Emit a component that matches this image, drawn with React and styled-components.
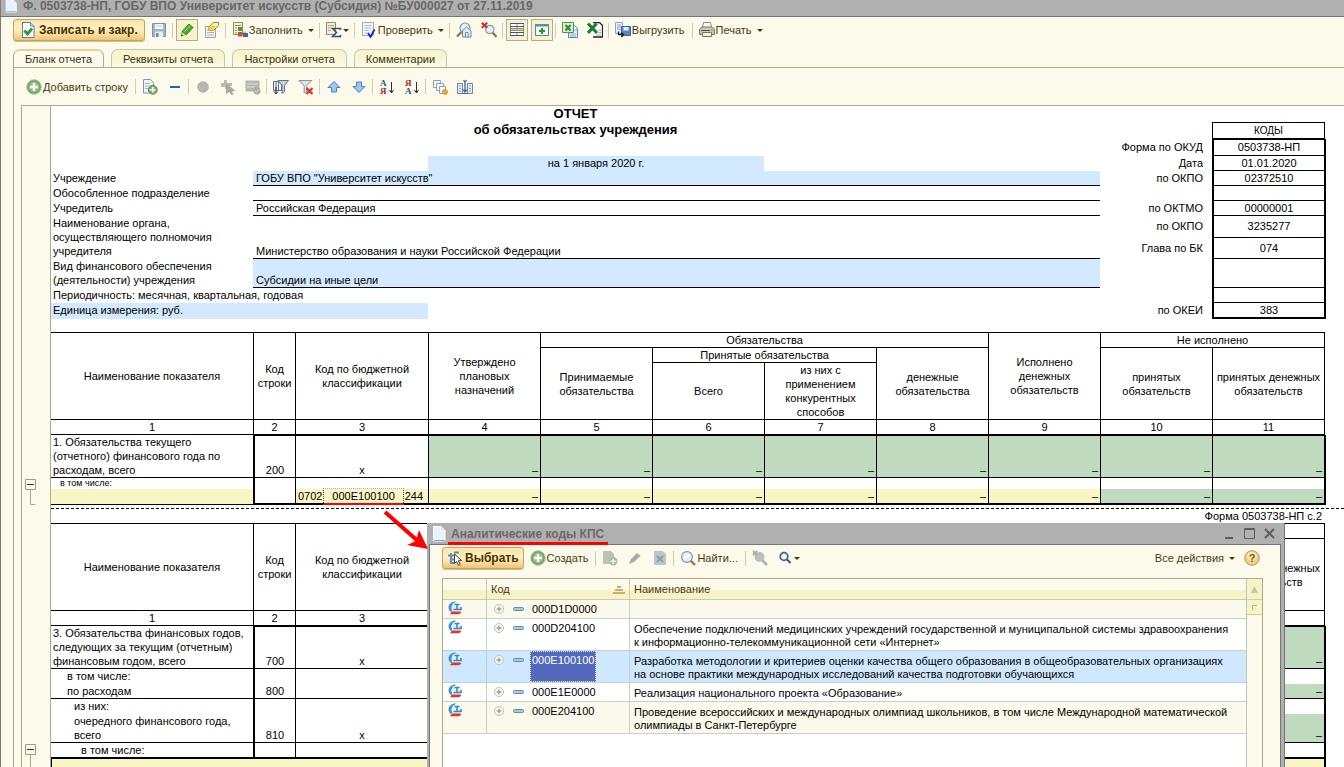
import { Fragment } from 'react';
import styled, { createGlobalStyle, css } from 'styled-components';

const GlobalStyle = createGlobalStyle`
  * {
    box-sizing: border-box;
  }

  body {
    margin: 0;
    overflow: hidden;
    background: #fcfaeb;
    font-family: 'Liberation Sans', Arial, sans-serif;
    font-size: 11px;
    color: #000;
  }

  button {
    font: inherit;
    color: inherit;
  }

  svg {
    display: block;
    flex: none;
  }
`;

/* ---------- window frame ---------- */

const Window = styled.div`
  position: relative;
  display: flex;
  flex-direction: column;
  height: 100vh;
  overflow: hidden;
  border-left: 1px solid #7c7c7c;
  background: #fcfaeb;
`;

const TitleBar = styled.header`
  display: flex;
  flex: none;
  align-items: center;
  gap: 5px;
  height: 17px;
  padding: 0 0 4px 3px;
  border-bottom: 1px solid #757575;
  background: #b0b0b0;
  overflow: hidden;
`;

const WindowTitle = styled.h1`
  margin: 0;
  font-size: 12px;
  line-height: 14px;
  font-weight: 700;
  color: #686868;
  white-space: nowrap;
`;

const Toolbar = styled.div`
  display: flex;
  flex: none;
  align-items: center;
  gap: 3px;
  height: 26px;
  padding: 0 12px;
  color: #4a3a0c;
`;

const SheetToolbar = styled(Toolbar)`
  height: 37px;
  padding: 0 9px;
`;

const ToolButton = styled.button`
  display: flex;
  align-items: center;
  gap: 1px;
  height: 22px;
  padding: 0 ${({ $labelled }) => ($labelled ? 4 : 2)}px 0 2px;
  border: 1px solid transparent;
  background: none;
  white-space: nowrap;

  ${({ $pressed }) =>
    $pressed &&
    css`
      border-color: #b5ab84;
      background: #f5f2cd;
    `}
`;

const PrimaryButton = styled.button`
  display: flex;
  align-items: center;
  gap: ${({ $compact }) => ($compact ? 2 : 3)}px;
  height: 22px;
  padding: 0 ${({ $compact }) => ($compact ? 4 : 6)}px;
  border: 1px solid #c9a55c;
  border-radius: 3px;
  background: linear-gradient(#fbe3ab, #fcefc4 45%, #f7dc9c 75%, #efc473);
  box-shadow: 0 1px 0 #d3bf8d;
  font-size: 12px;
  font-weight: 700;
  color: #4a3300;
  white-space: nowrap;
`;

const Separator = styled.span`
  width: 1px;
  height: 15px;
  margin-left: -1px;
  background: #c5d3b8;
`;

const Caret = styled.span`
  width: 5px;
  margin-left: ${({ $tight }) => ($tight ? 0 : 4)}px;
  border: solid transparent;
  border-width: 3px 3px 0;
  border-top-color: #4a3a0c;
`;

const Spacer = styled.span`
  flex: 1;
`;

const TabStrip = styled.nav`
  display: flex;
  flex: none;
  align-items: flex-end;
  gap: 7px;
  height: 24px;
  padding-left: 12px;
`;

const Tab = styled.button`
  height: 18px;
  padding: 0 11px;
  border: 1px solid #b9cdb0;
  border-bottom: none;
  border-radius: 7px 7px 0 0;
  background: linear-gradient(#f7f5c8, #f8f6d6 60%, #fcfaeb);
  color: #3c3010;
  white-space: nowrap;

  ${({ $active }) =>
    $active &&
    css`
      height: 19px;
      margin-bottom: -1px;
      padding-bottom: 1px;
      border-color: #b0aa8c;
      border-top: 2px solid #eccf96;
      background: #fcfaeb;
    `}
`;

const TabPanel = styled.main`
  display: flex;
  flex: 1;
  flex-direction: column;
  min-height: 0;
  margin-left: 12px;
  border: solid #b0aa8c;
  border-width: 1px 0 0 1px;
`;

/* ---------- spreadsheet ---------- */

const SheetFrame = styled.div`
  flex: 1;
  min-height: 0;
  margin-left: 7px;
  padding-left: 28px;
  border: solid #b0aa8c;
  border-width: 1px 0 0 1px;
`;

const Sheet = styled.div`
  min-height: 100%;
  border-left: 1px solid #b0aa8c;
  background: #fff;
`;

const FormHead = styled.section`
  display: grid;
  grid-template-columns: 202fr 175fr 336fr 336fr 112fr 114fr;
  grid-template-rows: 16px 17px 17px 15px 15px 15px 15px 22px 21px 29px 15px 16px;
  width: calc(100% - 18px);
  margin-bottom: 13px;
  line-height: 14px;
`;

const place = css`
  grid-row: ${({ $row }) => $row};
  grid-column: ${({ $col }) => $col};
`;

const FormTitle = styled.div`
  ${place}
  font-size: 13px;
  line-height: 16px;
  font-weight: 700;
  text-align: center;
`;

const PeriodBand = styled.div`
  ${place}
  background: #d2e9ff;
  text-align: center;
`;

const FieldLabel = styled.div`
  ${place}
  padding-left: 2px;
  white-space: pre-line;
  ${({ $filled }) => $filled && 'background: #d2e9ff;'}
`;

const FieldValue = styled.div`
  ${place}
  display: flex;
  align-items: flex-end;
  padding-left: 3px;
  border-bottom: 1px solid #000;
  background: ${({ $filled }) => ($filled ? '#d2e9ff' : '#fff')};
`;

const CodeLabel = styled.div`
  ${place}
  display: flex;
  align-items: center;
  justify-content: flex-end;
  padding: 0 9px 2px 0;
`;

const CodeHeading = styled.div`
  ${place}
  margin-right: 1px;
  border: 1px solid #000;
  line-height: 15px;
  font-size: 10px;
  text-align: center;
`;

const CodeValue = styled.div`
  ${place}
  display: flex;
  align-items: center;
  justify-content: center;
  padding-bottom: 1px;
  border: solid #000;
  border-width: ${({ $first }) => ($first ? 1 : 0)}px 2px ${({ $last }) => ($last ? 2 : 1)}px;
`;

const ReportTable = styled.table`
  width: calc(100% - 20px);
  table-layout: fixed;
  border-collapse: separate;
  border-spacing: 0;
  border-top: 1px solid #000;
  line-height: 14px;
`;

const HeadCell = styled.th`
  padding: 0;
  height: ${({ $h }) => $h}px;
  border: solid #000;
  border-width: 0 1px 1px 0;
  font-weight: 400;
  text-align: center;
  vertical-align: middle;
  white-space: pre-line;
`;

const fills = {
  green: '#c0dac0',
  yellow: '#f8f6c4',
  none: 'transparent',
};

const Cell = styled.td`
  position: relative;
  height: ${({ $h }) => $h}px;
  padding: 0 2px;
  border: solid #000;
  border-width: ${({ $top }) => ($top ? 1 : 0)}px 1px ${({ $bottom = 1 }) => $bottom}px
    ${({ $left }) => ($left ? 1 : 0)}px;
  background: ${({ $fill = 'none' }) => fills[$fill]};
  text-align: ${({ $align = 'left' }) => $align};
  vertical-align: bottom;
  white-space: pre-line;

  &:last-child {
    box-shadow: 1px 0 0 #000;
  }
`;

const NameCell = styled(Cell)`
  padding-left: ${({ $indent = 0 }) => 2 + $indent * 7}px;
  font-size: ${({ $small }) => ($small ? 9 : 11)}px;
  line-height: ${({ $small }) => ($small ? 10 : 14)}px;
  vertical-align: top;
`;

const Classification = styled.div`
  display: flex;
  align-items: center;
  justify-content: space-between;
  height: 14px;
  padding-right: 3px;
`;

const ActiveCode = styled.span`
  padding: 0 8px;
  border: 1px dotted #445;
  border-top-color: #9ab8cc;
  border-bottom: 2px solid #f00;
  line-height: 14px;
`;

const PageBreak = styled.div`
  height: 4px;
  border-bottom: 1px dashed #000;
`;

const PageLabel = styled.div`
  height: 14px;
  margin-right: 22px;
  line-height: 14px;
  text-align: right;
`;

const GroupToggle = styled.button`
  position: absolute;
  top: 1px;
  left: -26px;
  display: flex;
  padding: 0;
  border: none;
  background: none;
`;

/* ---------- dialog ---------- */

const Dialog = styled.section`
  position: absolute;
  top: 523px;
  right: 60px;
  bottom: -10px;
  left: 426px;
  display: flex;
  flex-direction: column;
  border: solid #b0b0b0;
  border-width: 0 3px 0 2px;
  background: #fcfaeb;
  box-shadow: 1px 0 0 #757575;
`;

const DialogTitleBar = styled.header`
  display: flex;
  flex: none;
  align-items: center;
  gap: 1px;
  height: 22px;
  padding: 0 6px 0 2px;
  border-bottom: 1px solid #757575;
  background: #b0b0b0;
`;

const DialogTitle = styled.h2`
  align-self: stretch;
  margin: 0 0 -1px;
  padding: 4px 4px 0 3px;
  border-bottom: 3px solid #f00;
  font-size: 12px;
  line-height: 15px;
  font-weight: 700;
  color: #6a6a6a;
`;

const WindowButtons = styled.div`
  display: flex;
  gap: 9px;
`;

const WindowButton = styled.button`
  display: flex;
  padding: 0;
  border: none;
  background: none;
`;

const DialogBody = styled.div`
  display: flex;
  flex: 1;
  flex-direction: column;
  border: solid #757575;
  border-width: 0 1px;
`;

const DialogTools = styled(Toolbar)`
  padding: 0 17px 0 12px;
  margin-bottom: 7px;
`;

const ListFrame = styled.div`
  display: flex;
  flex: 1;
  margin: 0 17px 0 12px;
  border: 1px solid #b0aa8c;
  background: #fff;
`;

const CodeTable = styled.table`
  flex: 1;
  align-self: flex-start;
  table-layout: fixed;
  border-collapse: separate;
  border-spacing: 0;
  line-height: 13px;
`;

const ColumnHead = styled.th`
  height: 21px;
  padding: 0 4px;
  border: solid #c3ceb0;
  border-width: 0 ${({ $last }) => ($last ? 0 : 1)}px 1px 0;
  background: linear-gradient(#fcfaeb 0 55%, #f6f3c8 55%);
  font-weight: 400;
  text-align: left;
  color: #4a3a0c;
`;

const HeadRow = styled.div`
  display: flex;
  align-items: center;
  justify-content: space-between;
`;

const rowFills = { plain: '#fff', tinted: '#fbf9ec', selected: '#cfe8ff' };

const ListRow = styled.tr`
  background: ${({ $tone }) => rowFills[$tone]};
`;

const ListCell = styled.td`
  height: ${({ $tall }) => ($tall ? 32 : 19)}px;
  padding: ${({ $pad = '4px 4px 1px' }) => $pad};
  border: solid #c0d6c4;
  border-width: 0 ${({ $last }) => ($last ? 0 : 1)}px 1px 0;
  vertical-align: top;
`;

const CodeLine = styled.div`
  display: flex;
  align-items: flex-start;
  height: ${({ $tall }) => ($tall ? 31 : 18)}px;
  padding-left: 7px;

  svg {
    margin-top: 4px;
  }
`;

const CodeText = styled.span`
  align-self: stretch;
  margin-left: 6px;
  padding: 3px 1px 0;
  border: 1px solid transparent;
  border-top: none;

  ${({ $selected }) =>
    $selected &&
    css`
      border: 1px dotted #dfe6ff;
      padding-top: 2px;
      background: #5468be;
      color: #fff;
    `}
`;

const ScrollRail = styled.div`
  display: flex;
  flex: none;
  flex-direction: column;
  width: 16px;
  border-left: 1px solid #b9cdb0;
  background: #fcfaeb;
`;

const ScrollButton = styled.button`
  display: flex;
  align-items: center;
  justify-content: center;
  height: ${({ $h }) => $h}px;
  padding: 0;
  border: none;
  border-bottom: 1px solid #cfcda0;
  background: #f6f3c8;
`;

const Pointer = styled.svg`
  position: absolute;
  top: 508px;
  left: 378px;
`;

/* ---------- icons ---------- */

const art = {
  doc: (
    <>
      <path d="M2.5.5h7.500l4 4v10.500H2.500z" fill="#e8f3ff" stroke="#fff" />
      <path d="M9.500 1v4h4" fill="#cfe0f2" stroke="#fff" />
      <path d="M3 14.500h11" stroke="#7fa6cf" />
    </>
  ),
  docCheck: (
    <>
      <path d="M2.500.5h8l3.500 3.500v11.500H2.500z" fill="#fff" stroke="#5b84b1" />
      <path d="M10.500.5v3.500h3.500" fill="#cfe2f4" stroke="#5b84b1" />
      <path d="M4.500 8.500l3 3.500 4.500-5.500" fill="none" stroke="#2f9a2b" strokeWidth="2.800" />
    </>
  ),
  save: (
    <>
      <path d="M1.500 1.500h13v13h-13z" fill="#9fb4cb" stroke="#7d93ab" />
      <path d="M4 2h8v5H4z" fill="#f7fafc" />
      <path d="M5 4h6" stroke="#b8c6d4" />
      <path d="M4 9.500h8V15H4z" fill="#e8edf2" />
      <path d="M5 11h2.500v4H5z" fill="#6f86a0" />
    </>
  ),
  pencil: (
    <>
      <path d="M2.500 13.500l1-4.500L10 2l4 3.500L7.500 12.500z" fill="#43ad2e" stroke="#2f8520" />
      <path d="M2 14.500l1.500-4 3 2.500z" fill="#f4efc0" />
      <path d="M2 14.500l.8-2 1.500 1.200z" fill="#223" />
      <path d="M5.500 9.500l5.500-6" stroke="#a0e286" />
    </>
  ),
  eraser: (
    <>
      <path d="M1.500 4.500h10v11h-10z" fill="#f4f5ee" stroke="#9aa7a8" />
      <path d="M3 8h6M3 10.500h7M3 13h7" stroke="#9fb2c4" />
      <path d="M4.500 5.500l4.500-5h5.500v3l-4.500 4.500H4.500z" fill="#fff4b8" stroke="#a08a2a" />
      <path d="M4.500 5.500l2-2h5L9.500 8h-5z" fill="#f2cf3e" />
    </>
  ),
  fill: (
    <>
      <path d="M1.500.5h9v12h-9z" fill="#f4f0dc" stroke="#8d8a66" />
      <path d="M3 3.500h6M3 6h2M3 8.500h2M3 11h2" stroke="#8d8a66" />
      <path d="M6 5h4v4H6z" fill="#35a535" />
      <path d="M6 10h4.500v4.500H6z" fill="#d64a2c" />
      <path d="M11 11h5v4h-5z" fill="#2d66c4" />
      <path d="M11 9.500h3v1.500h-3z" fill="#efc23e" />
    </>
  ),
  sigma: (
    <>
      <path d="M.5.5h9v12h-9z" fill="#f2eeda" stroke="#8d8a66" />
      <path d="M2 3.500h6M2 6h3M2 8.500h3" stroke="#a9a582" />
      <path d="M14.500 8V6.500h-8l4 4-4 4h8V13" fill="none" stroke="#33506f" strokeWidth="1.500" />
    </>
  ),
  check: (
    <>
      <path d="M1.500.5h11v13h-11z" fill="#f1f6fb" stroke="#9aabbc" />
      <path d="M3.500 3.500h7M3.500 6h7M3.500 8.500h4M3.500 11h3" stroke="#a8bccd" />
      <path d="M7 11l2.500 4 4-7.500" fill="none" stroke="#1a22e0" strokeWidth="1.800" />
    </>
  ),
  searchHome: (
    <>
      <path d="M1 14.500L5.500 10" stroke="#a5713c" strokeWidth="2.400" />
      <circle cx="9" cy="6" r="5" fill="#e6f1f7" stroke="#8499a8" strokeWidth="1.200" />
      <path d="M6.500 8.500l4-3.500 4.500 3.500v6.500H6.500z" fill="#d8e8f4" stroke="#6a8fb0" />
      <path d="M9.500 10.500h2.500V15H9.500z" fill="#fff" stroke="#6a8fb0" />
    </>
  ),
  searchOff: (
    <>
      <path d="M11.500 10.500l4 4.500" stroke="#a5713c" strokeWidth="2.400" />
      <circle cx="8.800" cy="7.500" r="4.200" fill="#e2eff8" stroke="#8499a8" strokeWidth="1.200" />
      <path d="M.8.8l5.400 5M6.200.8L.8 5.800" stroke="#d8261c" strokeWidth="2" />
    </>
  ),
  rows: (
    <>
      <path d="M1 1.500h14v12H1z" fill="#fff" />
      <path d="M1.500 1v13M8 1v5M14.500 1v13M8 10v4" stroke="#7f93ab" />
      <path d="M1 1.500h14M1 4.500h14M1 10.500h14M1 13.500h14" stroke="#3f5878" />
      <path d="M1.500 6.500h13v2h-13z" fill="#f3cf7c" stroke="#8f8a68" />
    </>
  ),
  plusWindow: (
    <>
      <path d="M1.500 2.500h13v11h-13z" fill="#f8fbfe" stroke="#5681ae" />
      <path d="M1 2h14v2.500H1z" fill="#5c8abb" />
      <path d="M8 6v6M5 9h6" stroke="#1fa01f" strokeWidth="2.200" />
    </>
  ),
  excelDoc: (
    <>
      <path d="M6.500 3.500h6l3 3v9h-9z" fill="#e8f0fa" stroke="#5d82b4" />
      <path d="M8 12h6M8 14h6M12.500 8H15" stroke="#8eaad0" />
      <path d="M.5.5h11v10H.5z" fill="#d8efcc" stroke="#4a9850" />
      <path d="M3.500 3l5 5.500M8.500 3l-5 5.500" stroke="#2f8a2f" strokeWidth="2" />
    </>
  ),
  excel: (
    <>
      <path d="M5.500.5h7l3 3v11.500h-10z" fill="#fff" />
      <path d="M6 .5h6.500l3 3V15H6" fill="none" stroke="#222" strokeWidth="1.300" />
      <path d="M1 1.500l9 9.500M9.500 1.500L1 11" stroke="#1c7d2c" strokeWidth="3" />
      <path d="M10 13h4M11.500 8h2.500M11.500 10.500h2.500" stroke="#7cbc88" />
    </>
  ),
  unload: (
    <>
      <path d="M.5.5h7v11h-7z" fill="#e9f2fb" stroke="#86a5c8" />
      <path d="M2 3h4M2 5h4M2 7h4" stroke="#86a5c8" />
      <path d="M6.500 4.500h9v9h-9z" fill="#5a86cf" stroke="#3a62a8" />
      <path d="M8.500 5h5v3.500h-5z" fill="#e8effc" />
      <path d="M3.500 9.500v3h5M6.500 10.500l2 2-2 2.500" fill="none" stroke="#222" strokeWidth="1.400" />
    </>
  ),
  print: (
    <>
      <path d="M4.500.5h7l1 5h-9z" fill="#fbfbf4" stroke="#8d8d80" />
      <path d="M.5 7l2.500-2h10l2.500 2v5.500H.5z" fill="#c9c9c1" stroke="#77776c" />
      <path d="M3.500 10.500h9v4h-9z" fill="#f5f0d0" stroke="#77776c" />
      <path d="M2 8.500h9" stroke="#55554c" />
      <path d="M12 8h2" stroke="#3fae3f" />
    </>
  ),
  add: (
    <>
      <circle cx="8" cy="8" r="7.200" fill="#6fa45e" stroke="#a9b8a0" />
      <circle cx="8" cy="8" r="5.400" fill="#93c07e" />
      <path d="M8 4v8M4 8h8" stroke="#fff" strokeWidth="2.400" />
    </>
  ),
  docAdd: (
    <>
      <path d="M1.500.5h7l3 3v10.500h-10z" fill="#eef4fa" stroke="#7f97b0" />
      <path d="M3 4.500h5M3 7h6M3 9.500h3" stroke="#a5b6c5" />
      <circle cx="10.800" cy="10.800" r="4.400" fill="#86b068" stroke="#5b8848" />
      <path d="M10.800 8v5.600M8 10.800h5.600" stroke="#fff" strokeWidth="1.600" />
    </>
  ),
  minus: <path d="M3 8h10" stroke="#1f5fc0" strokeWidth="2" />,
  grayDot: <circle cx="8" cy="8" r="5.800" fill="#b4b6b0" />,
  grayCursor: (
    <>
      <path d="M4 1h3v3h5v3H9v3H5V8H1V4h3z" fill="#b9bbb5" />
      <path d="M6 4l9.500 8-3.800.3 2 3-2.400.7-2-3L6 15z" fill="#a6a8a2" />
    </>
  ),
  grayDocs: (
    <>
      <path d="M.5 1.500h14v11H.5z" fill="#b4b8b0" />
      <path d="M2 5h11M2 8h7" stroke="#dfe1d8" />
      <circle cx="12" cy="12" r="3.500" fill="#a4b09e" />
      <path d="M10 12l1.500 1.500 2.500-3" fill="none" stroke="#d9dfd4" />
    </>
  ),
  filterDoc: (
    <>
      <path d="M.5 2.500h8v9h-8z" fill="#eef4fa" stroke="#5a6f86" />
      <path d="M3 3v9M5.500 3v9" stroke="#5a6f86" />
      <path d="M5 1.500h10.500l-4 5v6l-2.500 2v-8z" fill="#c8d2da" stroke="#66747f" />
      <path d="M3 8v7M1 12.500l2 2.500 2-2.500" fill="none" stroke="#234" />
    </>
  ),
  filterOff: (
    <>
      <path d="M.8 1.500h13l-5 5v6l-2.600 1.500v-7.500z" fill="#dde2e4" stroke="#8a949b" />
      <path d="M8.500 9l6 6M14.500 9l-6 6" stroke="#d8301c" strokeWidth="2.200" />
    </>
  ),
  up: <path d="M8 2.500l6 6h-3.500v4.500h-5V8.500H2z" fill="#9cc8f0" stroke="#4a7fb8" />,
  down: <path d="M8 13.500l-6-6h3.500V3h5v4.500H14z" fill="#9cc8f0" stroke="#4a7fb8" />,
  copyDocs: (
    <>
      <path d="M1.500 1.500h7v7h-7z" fill="#f6fafe" stroke="#8aa0b8" />
      <path d="M4.500 4.500h7v7h-7z" fill="#f6fafe" stroke="#8aa0b8" />
      <path d="M7.500 7.500h6v7h-6z" fill="#f6fafe" stroke="#8aa0b8" />
      <circle cx="13" cy="13" r="2.400" fill="#edb13a" stroke="#c99534" />
    </>
  ),
  columns: (
    <>
      <path d="M.5 4.500h5v10h-5zM10.500 4.500h5v10h-5z" fill="#e8eff7" stroke="#6c86a4" />
      <path d="M5.500 14.500h5" stroke="#3b5f8c" />
      <path d="M2 7h2M2 9.500h2M2 12h2M12 7h2M12 9.500h2M12 12h2" stroke="#8aa0b8" />
      <path d="M8 3v10M6 10.500l2 2.500 2-2.500M6.500 1l1.500 2 1.500-2" fill="none" stroke="#2f5c94" strokeWidth="1.200" />
    </>
  ),
  choose: (
    <>
      <path d="M1 5.500h8M3 9.500h6M3 13h5M4 3v11M7 2.500h5" stroke="#5f8fc0" strokeWidth="2" />
      <path d="M7.500 4l7 6.500-3.200.3 2 3.700-1.800.9-1.900-3.800L7.500 13.500z" fill="#fff" stroke="#444" />
    </>
  ),
  grayDocAdd: (
    <>
      <path d="M1 1h8l3 3v10H1z" fill="#b9c3b6" />
      <circle cx="11.300" cy="11.300" r="4.200" fill="#a9bda0" />
      <path d="M11.300 8.500v5.600M8.500 11.300h5.600" stroke="#eef2ea" strokeWidth="1.600" />
    </>
  ),
  grayPencil: <path d="M2 14l2-5 6-6 3.500 3L7 12z" fill="#a9ada2" />,
  grayDelete: (
    <>
      <path d="M2 1h9l3 3v11H2z" fill="#b9c6cc" />
      <path d="M5 6l6 6M11 6l-6 6" stroke="#8e9ba0" strokeWidth="2" />
    </>
  ),
  search: (
    <>
      <path d="M10.500 10.500l4.500 4.500" stroke="#a5713c" strokeWidth="2.400" />
      <circle cx="7" cy="7" r="5.400" fill="#e4f2fb" stroke="#7c90a2" strokeWidth="1.200" />
      <path d="M4.500 9l4.500-4.500" stroke="#fff" strokeWidth="2" />
    </>
  ),
  graySearch: (
    <>
      <path d="M10 10l5 5" stroke="#aeb2ac" strokeWidth="2.600" />
      <circle cx="7.500" cy="7" r="5" fill="#b9c0bd" />
      <path d="M1 1l4 4M5 1L1 5" stroke="#a5aaa6" strokeWidth="1.800" />
    </>
  ),
  smallSearch: (
    <>
      <path d="M9.500 9l4 4" stroke="#3a5a80" strokeWidth="2.200" />
      <circle cx="7" cy="6.500" r="3.800" fill="#f6fafd" stroke="#3d6796" strokeWidth="1.800" />
    </>
  ),
  help: (
    <>
      <circle cx="8" cy="8" r="7.300" fill="#f6cf86" stroke="#a89a74" />
      <circle cx="8" cy="6.500" r="4.800" fill="#fbe4b4" />
      <text x="8" y="12" fontSize="11" fontWeight="700" textAnchor="middle" fill="#7c5a1c">
        ?
      </text>
    </>
  ),
  account: (
    <>
      <path d="M4 12C.5 9.500.8 4.500 4.500 2.500c1.500-.9 3-1.300 4.500-1L6 4.500C4 6 4 9 5.500 11z" fill="#3a94d6" />
      <path d="M5.500 3.500h8v7.500h-8z" fill="#e6f3fb" />
      <path d="M7.500 4.500h5M10 4v5M6.500 9.500H14V7" fill="none" stroke="#3488c8" strokeWidth="1.600" />
      <path d="M3 14.200l2-2.700h8l1.500 1L12 14.200z" fill="#e0342c" />
    </>
  ),
};

function Icon({ name, size = 16 }) {
  return (
    <svg width={size} height={size} viewBox="0 0 16 16" aria-hidden="true">
      {art[name]}
    </svg>
  );
}

const letterColors = { А: '#24548c', Я: '#a8262c' };

function SortIcon({ first, second }) {
  return (
    <svg width="16" height="20" viewBox="0 0 16 20" aria-hidden="true">
      <g fontFamily="Liberation Serif, serif" fontSize="9" fontWeight="700">
        <text x="1" y="9" fill={letterColors[first]}>{first}</text>
        <text x="1" y="17" fill={letterColors[second]}>{second}</text>
      </g>
      <path d="M12.500 5v11M10.500 13l2 3 2-3" fill="none" stroke="#234" />
    </svg>
  );
}

function Tool({ icon, label, title, caret, pressed }) {
  return (
    <ToolButton
      type="button"
      title={title}
      aria-label={label || title}
      $pressed={pressed}
      $labelled={label && !caret}
    >
      {typeof icon === 'string' ? <Icon name={icon} /> : icon}
      {label && <span>{label}</span>}
      {caret && <Caret $tight={!label} />}
    </ToolButton>
  );
}

function Toggle({ tail }) {
  return (
    <GroupToggle type="button" aria-label="Свернуть группу">
      <svg width="11" height="26" viewBox="0 0 11 26">
        <path d={tail ? 'M5.5 11v14.500h5' : 'M5.500 11v15'} fill="none" stroke="#b0aa8c" />
        <path d="M.5.5h10v10H.5z" fill="#fcfaeb" stroke="#a09a78" />
        <path d="M2 5.500h7" stroke="#333" />
      </svg>
    </GroupToggle>
  );
}

/* ---------- report data ---------- */

const columnWidths = [203, 42, 133, 112, 112, 112, 112, 112, 112, 112, 112];

const fields = [
  { row: 5, label: 'Учреждение', value: 'ГОБУ ВПО "Университет искусств"', filled: true },
  { row: 6, label: 'Обособленное подразделение', value: '' },
  { row: 7, label: 'Учредитель', value: 'Российская Федерация' },
  {
    row: '8 / 10',
    label: 'Наименование органа,\nосуществляющего полномочия\nучредителя',
    value: 'Министерство образования и науки Российской Федерации',
  },
  {
    row: 10,
    label: 'Вид финансового обеспечения\n(деятельности) учреждения',
    value: 'Субсидии на иные цели',
    filled: true,
  },
];

const codes = [
  { label: 'Форма по ОКУД', value: '0503738-НП' },
  { label: 'Дата', value: '01.01.2020' },
  { label: 'по ОКПО', value: '02372510' },
  { label: '', value: '' },
  { label: 'по ОКТМО', value: '00000001' },
  { label: 'по ОКПО', value: '3235277' },
  { label: 'Глава по БК', value: '074' },
  { label: '', value: '' },
  { label: '', value: '' },
  { label: 'по ОКЕИ', value: '383' },
];

const analyticCodes = [
  { code: '000D1D0000', lines: [''], tone: 'tinted' },
  {
    code: '000D204100',
    lines: [
      'Обеспечение подключений медицинских учреждений государственной и муниципальной системы здравоохранения',
      'к информационно-телекоммуникационной сети «Интернет»',
    ],
    tone: 'plain',
  },
  {
    code: '000E100100',
    lines: [
      'Разработка методологии и критериев оценки качества общего образования в общеобразовательных организациях',
      'на основе практики международных исследований качества подготовки обучающихся',
    ],
    tone: 'selected',
  },
  { code: '000E1E0000', lines: ['Реализация национального проекта «Образование»'], tone: 'plain' },
  {
    code: '000E204100',
    lines: [
      'Проведение всероссийских и международных олимпиад школьников, в том числе Международной математической',
      'олимпиады в Санкт-Петербурге',
    ],
    tone: 'tinted',
  },
];

function Columns() {
  return (
    <colgroup>
      {columnWidths.map((w, i) => (
        <col key={i} width={w} />
      ))}
    </colgroup>
  );
}

function ReportHead() {
  return (
    <thead>
      <tr>
        <HeadCell rowSpan={3}>Наименование показателя</HeadCell>
        <HeadCell rowSpan={3}>{'Код\nстроки'}</HeadCell>
        <HeadCell rowSpan={3}>{'Код по бюджетной\nклассификации'}</HeadCell>
        <HeadCell rowSpan={3}>{'Утверждено\nплановых\nназначений'}</HeadCell>
        <HeadCell colSpan={4} $h={15}>Обязательства</HeadCell>
        <HeadCell rowSpan={3}>{'Исполнено\nденежных\nобязательств'}</HeadCell>
        <HeadCell colSpan={2} $h={15}>Не исполнено</HeadCell>
      </tr>
      <tr>
        <HeadCell rowSpan={2}>{'Принимаемые\nобязательства'}</HeadCell>
        <HeadCell colSpan={2} $h={15}>Принятые обязательства</HeadCell>
        <HeadCell rowSpan={2}>{'денежные\nобязательства'}</HeadCell>
        <HeadCell rowSpan={2}>{'принятых\nобязательств'}</HeadCell>
        <HeadCell rowSpan={2}>{'принятых денежных\nобязательств'}</HeadCell>
      </tr>
      <tr>
        <HeadCell $h={57}>Всего</HeadCell>
        <HeadCell $h={57}>{'из них с\nприменением\nконкурентных\nспособов'}</HeadCell>
      </tr>
      <tr>
        {columnWidths.map((_, i) => (
          <HeadCell key={i} $h={15}>{i + 1}</HeadCell>
        ))}
      </tr>
    </thead>
  );
}

function Amounts({ values, tone, h, ...rest }) {
  return values.map((value, i) => (
    <Cell key={i} $fill={tone} $h={h} $align="right" {...rest}>
      {value}
    </Cell>
  ));
}

const blank = Array(8).fill('');
const zero = Array(8).fill('–');
const lastOnly = [...Array(7).fill(''), '–'];

function FirstPage() {
  return (
    <ReportTable>
      <Columns />
      <ReportHead />
      <tbody>
        <tr>
          <NameCell $h={43}>{'1. Обязательства текущего\n(отчетного) финансового года по\nрасходам, всего'}</NameCell>
          <Cell $left $top $align="center">200</Cell>
          <Cell $top $align="center">х</Cell>
          <Amounts values={zero} tone="green" h={43} $top />
        </tr>
        <tr>
          <NameCell $h={11} $small $indent={1} $bottom={0}>
            в том числе:
            <Toggle tail />
          </NameCell>
          <Cell $left rowSpan={2} $bottom={2} />
          <Cell $bottom={0} />
          <Amounts values={blank} h={11} $bottom={0} />
        </tr>
        <tr>
          <Cell $fill="yellow" $h={16} />
          <Cell $fill="yellow" $bottom={2}>
            <Classification>
              <span>0702</span>
              <ActiveCode>000E100100</ActiveCode>
              <span>244</span>
            </Classification>
          </Cell>
          <Amounts values={zero.slice(0, 6)} tone="yellow" h={16} $bottom={2} />
          <Amounts values={zero.slice(6)} tone="green" h={16} $bottom={2} />
        </tr>
      </tbody>
    </ReportTable>
  );
}

function SecondPage() {
  return (
    <ReportTable>
      <Columns />
      <ReportHead />
      <tbody>
        <tr>
          <NameCell $h={43}>{'3. Обязательства финансовых годов,\nследующих за текущим (отчетным)\nфинансовым годом, всего'}</NameCell>
          <Cell $left $top $align="center">700</Cell>
          <Cell $top $align="center">х</Cell>
          <Amounts values={lastOnly} tone="green" h={43} $top />
        </tr>
        <tr>
          <NameCell $h={15} $indent={2} $bottom={0}>в том числе:</NameCell>
          <Cell $left rowSpan={2} $align="center">800</Cell>
          <Cell rowSpan={2} />
          <Amounts values={blank} h={15} $bottom={0} />
        </tr>
        <tr>
          <NameCell $h={15} $indent={2}>по расходам</NameCell>
          <Amounts values={lastOnly} h={15} tone="green" />
        </tr>
        <tr>
          <NameCell $h={15} $indent={3} $bottom={0}>из них:</NameCell>
          <Cell $left rowSpan={2} $align="center">810</Cell>
          <Cell rowSpan={2} $align="center">х</Cell>
          <Amounts values={blank} h={15} $bottom={0} />
        </tr>
        <tr>
          <NameCell $h={29} $indent={3}>{'очередного финансового года,\nвсего'}</NameCell>
          <Amounts values={lastOnly} h={29} tone="green" />
        </tr>
        <tr>
          <NameCell $h={15} $indent={4} $bottom={2}>
            в том числе:
            <Toggle />
          </NameCell>
          <Cell $left $bottom={2} />
          <Cell $bottom={2} />
          <Amounts values={blank} h={15} $bottom={2} />
        </tr>
        <tr>
          <Cell colSpan={11} $left $fill="yellow" $h={30} />
        </tr>
      </tbody>
    </ReportTable>
  );
}

function FormHeader() {
  return (
    <FormHead>
      <FormTitle $row={1} $col="1 / 5">ОТЧЕТ</FormTitle>
      <FormTitle $row={2} $col="1 / 5">об обязательствах учреждения</FormTitle>
      <CodeHeading $row={2} $col={6}>КОДЫ</CodeHeading>
      <PeriodBand $row={4} $col={3}>на 1 января 2020 г.</PeriodBand>
      {fields.map((f) => (
        <Fragment key={f.row}>
          <FieldLabel $row={f.row} $col={1}>{f.label}</FieldLabel>
          <FieldValue $row={f.row} $col="2 / 5" $filled={f.filled}>{f.value}</FieldValue>
        </Fragment>
      ))}
      <FieldLabel $row={11} $col="1 / 3">Периодичность: месячная, квартальная, годовая</FieldLabel>
      <FieldLabel $row={12} $col="1 / 3" $filled>Единица измерения: руб.</FieldLabel>
      {codes.map((c, i) => (
        <Fragment key={i}>
          <CodeLabel $row={i + 3} $col={5}>{c.label}</CodeLabel>
          <CodeValue $row={i + 3} $col={6} $first={i === 0} $last={i === codes.length - 1}>
            {c.value}
          </CodeValue>
        </Fragment>
      ))}
    </FormHead>
  );
}

function CodesDialog() {
  return (
    <Dialog role="dialog" aria-labelledby="codes-title">
      <DialogTitleBar>
        <Icon name="doc" />
        <DialogTitle id="codes-title">Аналитические коды КПС</DialogTitle>
        <Spacer />
        <WindowButtons>
          <WindowButton type="button" aria-label="Свернуть">
            <svg width="11" height="11"><path d="M1 10h8" stroke="#5e5e5e" strokeWidth="2" /></svg>
          </WindowButton>
          <WindowButton type="button" aria-label="Развернуть">
            <svg width="11" height="11"><path d="M.5.5h10v10H.5zM1 1.500h9" fill="none" stroke="#5e5e5e" /></svg>
          </WindowButton>
          <WindowButton type="button" aria-label="Закрыть">
            <svg width="11" height="11"><path d="M1 1l9 9M10 1l-9 9" stroke="#5e5e5e" strokeWidth="2" /></svg>
          </WindowButton>
        </WindowButtons>
      </DialogTitleBar>
      <DialogBody>
        <DialogTools>
          <PrimaryButton type="button" $compact>
            <Icon name="choose" />
            Выбрать
          </PrimaryButton>
          <Tool icon="add" label="Создать" />
          <Separator />
          <Tool icon="grayDocAdd" title="Скопировать" />
          <Tool icon="grayPencil" title="Изменить" />
          <Tool icon="grayDelete" title="Удалить" />
          <Separator />
          <Tool icon="search" label="Найти..." />
          <Separator />
          <Tool icon="graySearch" title="Отменить поиск" />
          <Tool icon="smallSearch" title="История поиска" caret />
          <Spacer />
          <ToolButton type="button">
            Все действия
            <Caret />
          </ToolButton>
          <Tool icon="help" title="Справка" />
        </DialogTools>
        <ListFrame>
          <CodeTable>
            <colgroup>
              <col width="44" />
              <col width="143" />
              <col />
            </colgroup>
            <thead>
              <tr>
                <ColumnHead aria-label="Вид" />
                <ColumnHead>
                  <HeadRow>
                    Код
                    <svg width="12" height="9" aria-hidden="true">
                      <path d="M4 1h4v2H4zM2 4h8v2H2zM0 7h12v2H0z" fill="#cdb069" />
                    </svg>
                  </HeadRow>
                </ColumnHead>
                <ColumnHead $last>Наименование</ColumnHead>
              </tr>
            </thead>
            <tbody>
              {analyticCodes.map(({ code, lines, tone }) => {
                const tall = lines.length > 1;
                return (
                  <ListRow key={code} $tone={tone}>
                    <ListCell $tall={tall} $pad="0 4px">
                      <Icon name="account" />
                    </ListCell>
                    <ListCell $tall={tall} $pad="0">
                      <CodeLine $tall={tall}>
                        <svg width="10" height="10" aria-hidden="true">
                          <circle cx="5" cy="5" r="4.500" fill="#fcfcf4" stroke="#b9c0b2" />
                          <path d="M5 2.500v5M2.500 5h5" stroke="#7c8476" />
                        </svg>
                        <svg width="20" height="10" aria-hidden="true">
                          <rect x="9.500" y="3.500" width="10" height="3" rx="1" fill="#a9cbe0" stroke="#5f8ca8" />
                        </svg>
                        <CodeText $selected={tone === 'selected'}>{code}</CodeText>
                      </CodeLine>
                    </ListCell>
                    <ListCell $tall={tall} $last>
                      {lines.map((line) => (
                        <div key={line}>{line}</div>
                      ))}
                    </ListCell>
                  </ListRow>
                );
              })}
            </tbody>
          </CodeTable>
          <ScrollRail>
            <ScrollButton type="button" $h={21} aria-label="Вверх">
              <svg width="7" height="7"><path d="M3.500 0L7 7H0z" fill="#b4cfae" /></svg>
            </ScrollButton>
            <ScrollButton type="button" $h={15} aria-label="Ползунок">
              <svg width="5" height="5"><path d="M.5 5V.5H5" fill="none" stroke="#b4b890" /></svg>
            </ScrollButton>
          </ScrollRail>
        </ListFrame>
      </DialogBody>
    </Dialog>
  );
}

export default function App() {
  return (
    <Window>
      <GlobalStyle />
      <TitleBar>
        <Icon name="doc" size={14} />
        <WindowTitle>
          Ф. 0503738-НП, ГОБУ ВПО Университет искусств (Субсидия) №БУ000027 от 27.11.2019
        </WindowTitle>
      </TitleBar>
      <Toolbar>
        <PrimaryButton type="button">
          <Icon name="docCheck" />
          Записать и закр.
        </PrimaryButton>
        <Tool icon="save" title="Записать" />
        <Separator />
        <Tool icon="pencil" title="Редактировать" pressed />
        <Tool icon="eraser" title="Очистить" />
        <Separator />
        <Tool icon="fill" label="Заполнить" caret />
        <Separator />
        <Tool icon="sigma" title="Итоги" caret />
        <Separator />
        <Tool icon="check" label="Проверить" caret />
        <Separator />
        <Tool icon="searchHome" title="Расшифровка" />
        <Tool icon="searchOff" title="Отменить поиск" />
        <Separator />
        <Tool icon="rows" title="Строки" pressed />
        <Tool icon="plusWindow" title="Группы" pressed />
        <Separator />
        <Tool icon="excelDoc" title="Открыть в Excel" />
        <Tool icon="excel" title="Сохранить в Excel" />
        <Separator />
        <Tool icon="unload" label="Выгрузить" />
        <Separator />
        <Tool icon="print" label="Печать" caret />
      </Toolbar>
      <TabStrip>
        <Tab type="button" $active>Бланк отчета</Tab>
        <Tab type="button">Реквизиты отчета</Tab>
        <Tab type="button">Настройки отчета</Tab>
        <Tab type="button">Комментарии</Tab>
      </TabStrip>
      <TabPanel>
        <SheetToolbar>
          <Tool icon="add" label="Добавить строку" />
          <Separator />
          <Tool icon="docAdd" title="Добавить" />
          <Tool icon="minus" title="Удалить" />
          <Separator />
          <Tool icon="grayDot" title="Остановить" />
          <Tool icon="grayCursor" title="Выбрать" />
          <Tool icon="grayDocs" title="Показать" />
          <Separator />
          <Tool icon="filterDoc" title="Отбор" />
          <Tool icon="filterOff" title="Отключить отбор" />
          <Separator />
          <Tool icon="up" title="Вверх" />
          <Tool icon="down" title="Вниз" />
          <Separator />
          <Tool icon={<SortIcon first="А" second="Я" />} title="По возрастанию" />
          <Tool icon={<SortIcon first="Я" second="А" />} title="По убыванию" />
          <Separator />
          <Tool icon="copyDocs" title="Копировать" />
          <Tool icon="columns" title="Колонки" />
        </SheetToolbar>
        <SheetFrame>
          <Sheet>
            <FormHeader />
            <FirstPage />
            <PageBreak />
            <PageLabel>Форма 0503738-НП с.2</PageLabel>
            <SecondPage />
          </Sheet>
        </SheetFrame>
      </TabPanel>
      <CodesDialog />
      <Pointer width="52" height="44" viewBox="0 0 52 44" aria-hidden="true">
        <path d="M6 4l34 30" stroke="#f00" strokeWidth="4" />
        <path d="M49 41L28 37l9-4 3-11z" fill="#f00" />
      </Pointer>
    </Window>
  );
}
